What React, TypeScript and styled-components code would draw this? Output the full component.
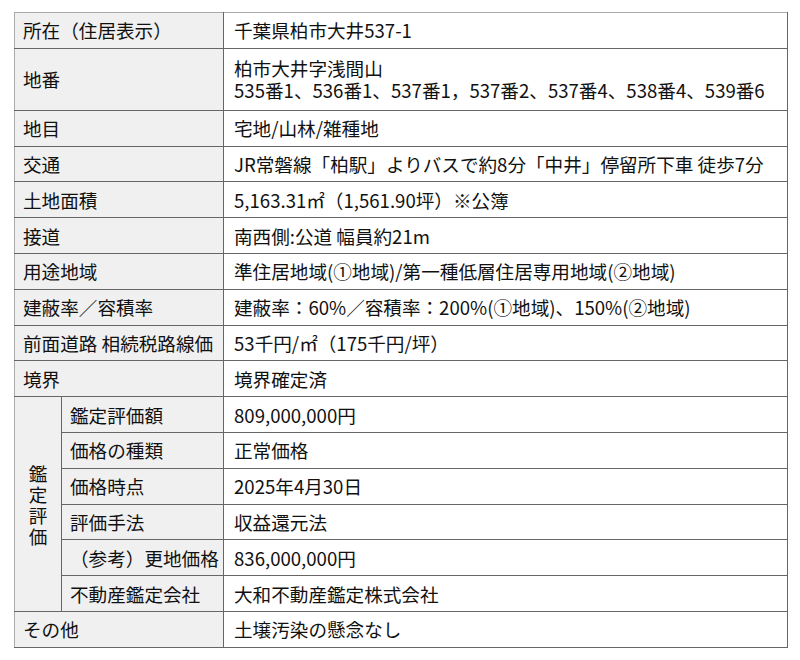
import React from 'react';
import styled, { createGlobalStyle } from 'styled-components';

const GlobalStyle = createGlobalStyle`
  html, body {
    margin: 0;
    padding: 0;
    background: #fff;
  }
  body {
    font-family: "Noto Sans CJK JP", "Noto Sans", sans-serif;
    color: #111;
  }
`;

const Page = styled.div`
  width: 800px;
  height: 660px;
  padding: 12px 0 0 14px;
  box-sizing: border-box;
`;

const Table = styled.table`
  width: 774px;
  table-layout: fixed;
  border-collapse: collapse;
  font-size: 18.6px;
  line-height: 22px;
`;

const Cell = styled.td<{ $edge?: boolean; $top?: boolean }>`
  border: 1px solid #666;
  border-left-color: ${({ $edge }) => ($edge ? '#aaa' : '#666')};
  border-top-color: ${({ $top }) => ($top ? '#aaa' : '#666')};
  padding: 0 8px;
  height: 35.8px;
  box-sizing: border-box;
  vertical-align: middle;
  white-space: nowrap;
`;

const Label = styled(Cell).attrs({ as: 'th' })`
  background: #f0f0f0;
  font-weight: 400;
  text-align: left;
`;

const GroupLabel = styled(Label)`
  padding: 0;
  text-align: center;
  white-space: normal;
`;

const Value = styled(Cell)`
  padding-left: 10px;
`;

const TallValue = styled(Value)`
  height: 62px;
`;

const Vertical = styled.span`
  display: inline-block;
  width: 1em;
  line-height: 21px;
  word-break: break-all;
`;

type Row = [string, React.ReactNode];

const topRows: Row[] = [
  ['地目', '宅地/山林/雑種地'],
  ['交通', 'JR常磐線「柏駅」よりバスで約8分「中井」停留所下車 徒歩7分'],
  ['土地面積', '5,163.31㎡（1,561.90坪）※公簿'],
  ['接道', '南西側:公道 幅員約21m'],
  ['用途地域', '準住居地域(①地域)/第一種低層住居専用地域(②地域)'],
  ['建蔽率／容積率', '建蔽率：60%／容積率：200%(①地域)、150%(②地域)'],
  ['前面道路 相続税路線価', '53千円/㎡（175千円/坪）'],
  ['境界', '境界確定済'],
];

const appraisal: Row[] = [
  ['鑑定評価額', '809,000,000円'],
  ['価格の種類', '正常価格'],
  ['価格時点', '2025年4月30日'],
  ['評価手法', '収益還元法'],
  ['（参考）更地価格', '836,000,000円'],
  ['不動産鑑定会社', '大和不動産鑑定株式会社'],
];

const App: React.FC = () => {
  return (
    <Page>
      <GlobalStyle />
      <Table>
        <colgroup>
          <col style={{ width: 47 }} />
          <col style={{ width: 162 }} />
          <col />
        </colgroup>
        <tbody>
          <tr>
            <Label colSpan={2} $edge $top>
              所在（住居表示）
            </Label>
            <Value $top>千葉県柏市大井537-1</Value>
          </tr>
          <tr>
            <Label colSpan={2} $edge>
              地番
            </Label>
            <TallValue>
              柏市大井字浅間山
              <br />
              535番1、536番1、537番1，537番2、537番4、538番4、539番6
            </TallValue>
          </tr>
          {topRows.map(([label, value]) => (
            <tr key={label}>
              <Label colSpan={2} $edge>
                {label}
              </Label>
              <Value>{value}</Value>
            </tr>
          ))}
          {appraisal.map(([label, value], i) => (
            <tr key={label}>
              {i === 0 && (
                <GroupLabel rowSpan={appraisal.length} $edge>
                  <Vertical>鑑定評価</Vertical>
                </GroupLabel>
              )}
              <Label>{label}</Label>
              <Value>{value}</Value>
            </tr>
          ))}
          <tr>
            <Label colSpan={2} $edge>
              その他
            </Label>
            <Value>土壌汚染の懸念なし</Value>
          </tr>
        </tbody>
      </Table>
    </Page>
  );
};

export default App;
